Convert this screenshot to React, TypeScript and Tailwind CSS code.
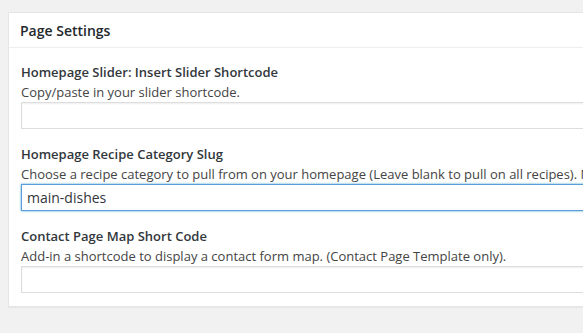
import { useState } from 'react';

type Field = {
  id: string;
  label: string;
  help: string;
  value: string;
  focused?: boolean;
};

const fields: Field[] = [
  {
    id: 'slider',
    label: 'Homepage Slider: Insert Slider Shortcode',
    help: 'Copy/paste in your slider shortcode.',
    value: '',
  },
  {
    id: 'recipe_cat',
    label: 'Homepage Recipe Category Slug',
    help: 'Choose a recipe category to pull from on your homepage (Leave blank to pull on all recipes). Must be the slug.',
    value: 'main-dishes',
    focused: true,
  },
  {
    id: 'map',
    label: 'Contact Page Map Short Code',
    help: 'Add-in a shortcode to display a contact form map. (Contact Page Template only).',
    value: '',
  },
];

export default function App() {
  const [values, setValues] = useState<Record<string, string>>(
    Object.fromEntries(fields.map((f) => [f.id, f.value]))
  );

  return (
    <div className="h-[333px] w-full overflow-hidden bg-[#f1f1f1] pl-2 pt-3 font-['Open_Sans',sans-serif] text-[13px] text-[#444]">
      <div className="w-[700px] border border-[#e5e5e5] bg-white shadow-[0_1px_1px_rgba(0,0,0,0.04)]">
        <div className="flex h-[35px] items-center border-b border-[#eee] px-[11px]">
          <h2 className="text-[14px] font-semibold text-[#23282d]">Page Settings</h2>
        </div>

        <div className="px-3 pb-[13px] pt-[14px]">
          {fields.map((f, i) => (
            <div key={f.id} className={i > 0 ? 'mt-[15px]' : ''}>
              <label htmlFor={f.id} className="block leading-5 font-semibold text-[#32373c]">
                {f.label}
              </label>
              <p className="whitespace-nowrap leading-5">{f.help}</p>
              <input
                id={f.id}
                type="text"
                value={values[f.id]}
                onChange={(e) => setValues({ ...values, [f.id]: e.target.value })}
                className={`block h-[27px] w-[640px] bg-white px-[5px] text-[14px] text-[#32373c] outline-none ${
                  f.focused
                    ? 'border border-[#5b9dd9] shadow-[0_0_2px_rgba(30,140,190,0.8)]'
                    : 'border border-[#ddd] shadow-[inset_0_1px_2px_rgba(0,0,0,0.07)]'
                }`}
              />
            </div>
          ))}
        </div>
      </div>
    </div>
  );
}
